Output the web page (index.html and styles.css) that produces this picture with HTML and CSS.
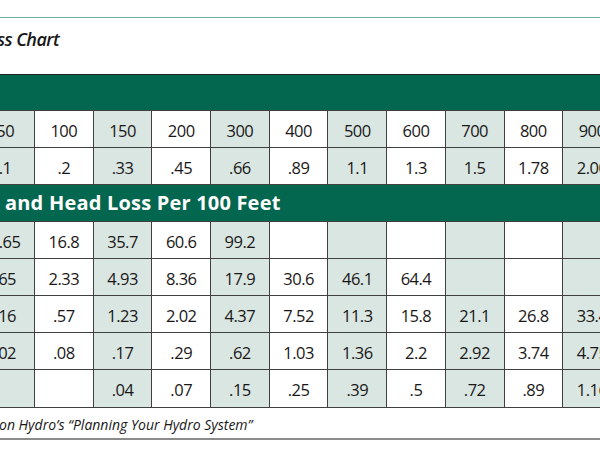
FILE: index.html
```html
<!DOCTYPE html>
<html>
<head>
<meta charset="utf-8">
<link rel="stylesheet" href="styles.css">
</head>
<body>
<div class="chart">
  <div class="title">ss Chart</div>
  <div class="band band-top"></div>
  <div class="row">
    <div class="cell s">50</div><div class="cell">100</div><div class="cell s">150</div><div class="cell">200</div><div class="cell s">300</div><div class="cell">400</div><div class="cell s">500</div><div class="cell">600</div><div class="cell s">700</div><div class="cell">800</div><div class="cell s">900</div>
  </div>
  <div class="row">
    <div class="cell s">.1</div><div class="cell">.2</div><div class="cell s">.33</div><div class="cell">.45</div><div class="cell s">.66</div><div class="cell">.89</div><div class="cell s">1.1</div><div class="cell">1.3</div><div class="cell s">1.5</div><div class="cell">1.78</div><div class="cell s">2.00</div>
  </div>
  <div class="band band-mid">and Head Loss Per 100 Feet</div>
  <div class="row">
    <div class="cell s">4.65</div><div class="cell">16.8</div><div class="cell s">35.7</div><div class="cell">60.6</div><div class="cell s">99.2</div><div class="cell"></div><div class="cell s"></div><div class="cell"></div><div class="cell s"></div><div class="cell"></div><div class="cell s"></div>
  </div>
  <div class="row">
    <div class="cell s">.65</div><div class="cell">2.33</div><div class="cell s">4.93</div><div class="cell">8.36</div><div class="cell s">17.9</div><div class="cell">30.6</div><div class="cell s">46.1</div><div class="cell">64.4</div><div class="cell s"></div><div class="cell"></div><div class="cell s"></div>
  </div>
  <div class="row">
    <div class="cell s">.16</div><div class="cell">.57</div><div class="cell s">1.23</div><div class="cell">2.02</div><div class="cell s">4.37</div><div class="cell">7.52</div><div class="cell s">11.3</div><div class="cell">15.8</div><div class="cell s">21.1</div><div class="cell">26.8</div><div class="cell s">33.4</div>
  </div>
  <div class="row">
    <div class="cell s">.02</div><div class="cell">.08</div><div class="cell s">.17</div><div class="cell">.29</div><div class="cell s">.62</div><div class="cell">1.03</div><div class="cell s">1.36</div><div class="cell">2.2</div><div class="cell s">2.92</div><div class="cell">3.74</div><div class="cell s">4.75</div>
  </div>
  <div class="row row-last">
    <div class="cell s"></div><div class="cell"></div><div class="cell s">.04</div><div class="cell">.07</div><div class="cell s">.15</div><div class="cell">.25</div><div class="cell s">.39</div><div class="cell">.5</div><div class="cell s">.72</div><div class="cell">.89</div><div class="cell s">1.16</div>
  </div>
  <div class="footer">on Hydro’s “Planning Your Hydro System”</div>
</div>
</body>
</html>
```

FILE: styles.css
```css
* { box-sizing: border-box; }
html, body {
  margin: 0;
  padding: 0;
  background: #ffffff;
  overflow: hidden;
}
.chart {
  width: 600px;
  height: 450px;
  overflow: hidden;
  padding-top: 17px;
  font-family: "Open Sans", "Liberation Sans", sans-serif;
  color: #1a1718;
}
.title {
  border-top: 1.5px solid #6fb0a3;
  height: 57px;
  padding-top: 9px;
  margin-left: -3px;
  font-size: 18px;
  font-style: italic;
  font-weight: 600;
  letter-spacing: -0.6px;
  line-height: 24px;
}
.band {
  background: #03664f;
  color: #ffffff;
}
.band-top {
  height: 36px;
  border-top: 1px solid #231f20;
}
.band-mid {
  height: 37px;
  border-top: 1.5px solid #404040;
  padding-left: 5px;
  font-size: 20px;
  font-weight: 700;
  line-height: 35px;
  letter-spacing: 0.2px;
}
.row {
  display: grid;
  grid-template-columns: repeat(11, 58.7px);
  margin-left: -24.7px;
  height: 37px;
  border-top: 1.5px solid #404040;
}
.row-last {
  border-bottom: 1.5px solid #404040;
  height: 38.5px;
}
.cell {
  border-left: 1.5px solid #404040;
  display: flex;
  align-items: center;
  justify-content: center;
  padding-top: 2px;
  font-size: 16.5px;
  letter-spacing: -0.5px;
  background: #ffffff;
}
.cell.s {
  background: #d9e6e1;
}
.footer {
  height: 32px;
  border-bottom: 2px solid #8c8c8c;
  margin-left: -1px;
  font-size: 14px;
  font-style: italic;
  line-height: 34px;
  letter-spacing: 0;
}
```
